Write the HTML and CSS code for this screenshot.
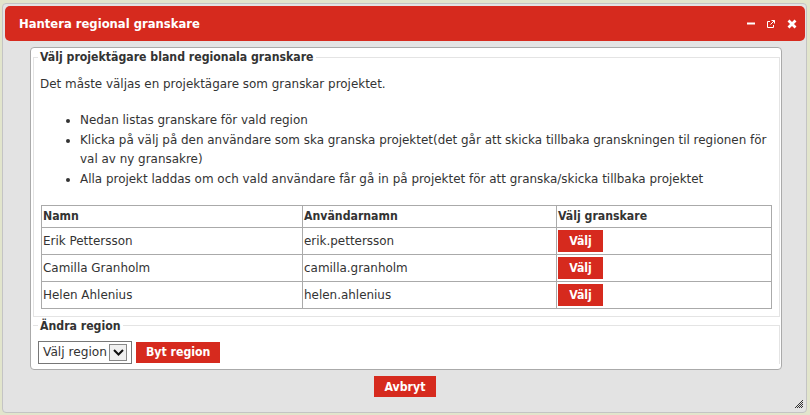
FILE: index.html
```html
<!DOCTYPE html>
<html lang="sv">
<head>
    <meta charset="UTF-8">
    <title>Hantera regional granskare</title>
    <link rel="stylesheet" href="styles.css">
</head>
<body>
<div class="dialog">
    <div class="titlebar">
        <span class="title">Hantera regional granskare</span>
        <span class="controls">
            <svg width="8" height="3" viewBox="0 0 8 3"><rect width="8" height="2" y="0.5" fill="#fff"/></svg>
            <svg width="8" height="8" viewBox="0 0 8 8"><path d="M3 1.500H.5v6h6V5M4.500 .5h3v3M7.500 .5L3.500 4.500" fill="none" stroke="#fff"/></svg>
            <svg width="10" height="10" viewBox="0 0 10 10"><path d="M1.500 1.500l7 7M8.500 1.500l-7 7" fill="none" stroke="#fff" stroke-width="2.800"/></svg>
        </span>
    </div>
    <div class="innehall">
        <div class="panel">
            <fieldset class="grupp">
                <legend>Välj projektägare bland regionala granskare</legend>
                <p class="intro">Det måste väljas en projektägare som granskar projektet.</p>
                <ul class="lista">
                    <li>Nedan listas granskare för vald region</li>
                    <li>Klicka på välj på den användare som ska granska projektet(det går att skicka tillbaka granskningen til regionen för val av ny gransakre)</li>
                    <li>Alla projekt laddas om och vald användare får gå in på projektet för att granska/skicka tillbaka projektet</li>
                </ul>
                <table class="tabell">
                    <tr>
                        <th class="kol_namn">Namn</th>
                        <th class="kol_anv">Användarnamn</th>
                        <th>Välj granskare</th>
                    </tr>
                    <tr>
                        <td>Erik Pettersson</td>
                        <td>erik.pettersson</td>
                        <td><button class="knapp knapp_valj">Välj</button></td>
                    </tr>
                    <tr>
                        <td>Camilla Granholm</td>
                        <td>camilla.granholm</td>
                        <td><button class="knapp knapp_valj">Välj</button></td>
                    </tr>
                    <tr>
                        <td>Helen Ahlenius</td>
                        <td>helen.ahlenius</td>
                        <td><button class="knapp knapp_valj">Välj</button></td>
                    </tr>
                </table>
            </fieldset>
            <fieldset class="grupp grupp_region">
                <legend>Ändra region</legend>
                <div class="region_rad">
                    <div class="valj_region">
                        <span>Välj region</span>
                        <span class="pil"><svg width="11" height="7" viewBox="0 0 11 7"><path d="M1 1l4.500 4.500L10 1" fill="none" stroke="#111" stroke-width="2"/></svg></span>
                    </div>
                    <button class="knapp">Byt region</button>
                </div>
            </fieldset>
        </div>
        <div class="fot">
            <button class="knapp knapp_avbryt">Avbryt</button>
        </div>
    </div>
    <svg class="grepp" width="8" height="8" viewBox="0 0 8 8"><path d="M0 8L8 0M2 8L8 2M4 8L8 4M6 8L8 6" stroke="#333" fill="none"/></svg>
</div>
</body>
</html>
```

FILE: styles.css
```css
html, body {
    margin: 0;
    height: 100%;
}
body {
    background-color: #e2e5cc;
    font-family: "DejaVu Sans", sans-serif;
    font-size: 11.95px;
    color: #333;
    overflow: hidden;
    padding: 3px 3px 0 2px;
    box-sizing: border-box;
}
.dialog {
    position: relative;
    height: 410px;
    background-color: #e3e3e3;
    border: 1px solid #c4c4c4;
    border-radius: 4px;
    padding: 2px 1px 2px 2px;
    box-sizing: border-box;
}
.titlebar {
    display: flex;
    justify-content: space-between;
    align-items: center;
    height: 35px;
    padding: 0 8px 0 14px;
    background-color: #d62a1e;
    border-radius: 5px;
    color: #fff;
}
.title {
    font-family: "DejaVu Sans Condensed", "DejaVu Sans", sans-serif;
    font-weight: bold;
    font-size: 12.9px;
}
.controls {
    display: flex;
    align-items: center;
    gap: 12px;
}
.innehall {
    padding: 6px 23px 0 25px;
}
.panel {
    height: 323px;
    background-color: #fff;
    border: 1px solid #aaa;
    border-radius: 4px;
    box-sizing: border-box;
    padding: 2px 1px 0 2px;
}
.grupp {
    border: 1px solid #e4e4e4;
    margin: 0;
    padding: 0 7px 7px;
}
.grupp legend {
    font-family: "DejaVu Sans Condensed", "DejaVu Sans", sans-serif;
    font-size: 12.2px;
    font-weight: bold;
    padding: 0 2px;
    margin-left: -3px;
}
.intro {
    margin: 13px 0 0 -1px;
}
.lista {
    margin: 20px 0 0;
    padding-left: 39px;
    line-height: 19.7px;
}
.tabell {
    width: 100%;
    margin-top: 15px;
    border-collapse: collapse;
}
.tabell th, .tabell td {
    border: 1px solid #aaa;
    text-align: left;
    padding: 2px 1px;
    height: 22px;
}
.tabell th {
    font-family: "DejaVu Sans Condensed", "DejaVu Sans", sans-serif;
    font-size: 12.2px;
    height: 17px;
}
.kol_namn {
    width: 258px;
}
.kol_anv {
    width: 251px;
}
.knapp {
    background-color: #d62a1e;
    color: #fff;
    border: 0;
    font-family: "DejaVu Sans Condensed", "DejaVu Sans", sans-serif;
    font-size: 12.2px;
    font-weight: bold;
    height: 21px;
    padding: 0 10px;
}
.knapp_valj {
    display: block;
    width: 45px;
    height: 22px;
    padding: 0;
}
.knapp_avbryt {
    padding: 0 11px;
}
.grupp_region {
    margin-top: 2px;
    border-bottom: 0;
    border-left: 0;
    padding: 8px 7px 0 8px;
}
.region_rad {
    display: flex;
    align-items: center;
    gap: 4px;
    margin-left: -3px;
}
.valj_region {
    display: flex;
    align-items: center;
    gap: 2px;
    width: 94px;
    height: 23px;
    padding: 0 2px 0 4px;
    font-size: 12.2px;
    background-color: #fff;
    border: 1px solid #777;
    box-sizing: border-box;
}
.pil {
    display: flex;
    align-items: center;
    justify-content: center;
    width: 18px;
    height: 17px;
    background-color: #f0f0f0;
    border: 1px solid #888;
    box-sizing: border-box;
}
.fot {
    display: flex;
    justify-content: center;
    margin: 6px 0 0 -2px;
}
.grepp {
    position: absolute;
    right: 3px;
    bottom: 4px;
}
```
